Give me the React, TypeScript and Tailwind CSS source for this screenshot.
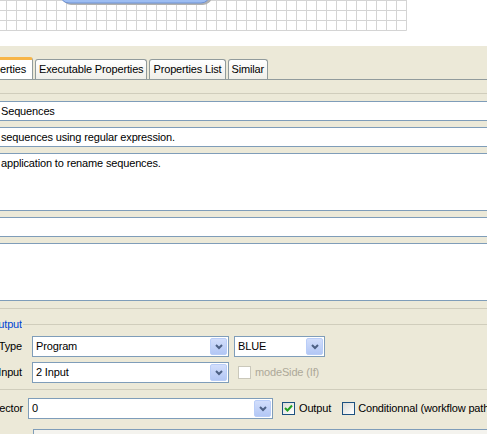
import React from 'react';

const font = "font-['Liberation_Sans',Arial,sans-serif] text-[11px] tracking-[-0.15px] text-black";

function Chevron() {
    return (
        <svg width="8" height="6" viewBox="0 0 8 6">
            <polyline points="1,1 4,4 7,1" fill="none" stroke="#4d6185" strokeWidth="2" />
        </svg>
    );
}

function Combo({ value, width }: { value: string; width: string }) {
    return (
        <div className={`${width} h-[21px] flex items-center bg-white border border-[#7f9db9] shrink-0`}>
            <span className="flex-1 pl-[3px] whitespace-nowrap overflow-hidden">{value}</span>
            <div className="w-[17px] h-[17px] mr-px flex items-center justify-center rounded-[2px] border border-[#b9cdf8] bg-gradient-to-b from-[#d2defb] to-[#b3c7f5]">
                <Chevron />
            </div>
        </div>
    );
}

function Check({ checked, disabled }: { checked?: boolean; disabled?: boolean }) {
    return (
        <div
            className={`w-[13px] h-[13px] shrink-0 flex items-center justify-center border ${
                disabled ? 'border-[#cac8bb] bg-white' : 'border-[#1c5180] bg-gradient-to-br from-[#dcdcd7] to-white'
            }`}
        >
            {checked && (
                <svg width="9" height="9" viewBox="0 0 9 9">
                    <polyline points="1,4 3.5,6.5 8,1.5" fill="none" stroke="#21a121" strokeWidth="2" />
                </svg>
            )}
        </div>
    );
}

function Field({ text }: { text: string }) {
    return (
        <div className="h-[20px] bg-white border-y border-[#7f9db9] flex items-center pl-px whitespace-nowrap">
            {text}
        </div>
    );
}

function Area({ text }: { text: string }) {
    return (
        <div className="h-[58px] bg-white border-y border-[#7f9db9] pl-px pt-[1px] whitespace-nowrap">
            {text}
        </div>
    );
}

function Label({ text, width, pr }: { text: string; width: string; pr: string }) {
    return (
        <div className={`${width} ${pr} shrink-0 flex justify-end overflow-hidden whitespace-nowrap`}>
            {text}
        </div>
    );
}

function Canvas() {
    const verticals = [...Array(41)].map((_, i) => 6.5 + i * 10);
    return (
        <div className="h-[46px] bg-white">
            <svg width="487" height="46">
                {verticals.map(x => (
                    <line key={x} x1={x} y1={0} x2={x} y2={30.5} stroke="#d4d4d4" />
                ))}
                {[0.5, 10.5, 20.5, 30.5].map(y => (
                    <line key={y} x1={0} y1={y} x2={406.5} y2={y} stroke="#d4d4d4" />
                ))}
                <rect x="62" y="-20" width="150" height="25" rx="9" fill="#b0b0b0" />
                <rect x="60" y="-22" width="150" height="25" rx="9" fill="#9dbdf2" stroke="#6f93d6" />
            </svg>
        </div>
    );
}

const tabs = ['Executable Properties', 'Properties List', 'Similar'];

export default function App() {
    return (
        <main className={`w-[487px] h-[434px] overflow-hidden bg-[#ece9d8] ${font}`}>
            <Canvas />

            <div className="h-[11px]" />
            <div className="h-[22px] flex items-end gap-[2px]">
                <div className="w-[33px] shrink-0 h-[22px] flex justify-end items-center overflow-hidden whitespace-nowrap bg-white border-t-[3px] border-t-[#f7b547] border-r border-r-[#919b9c] rounded-tr-[3px] pr-[6px] pb-[1px]">
                    Properties
                </div>
                {tabs.map(t => (
                    <div
                        key={t}
                        className="h-[20px] shrink-0 flex items-center px-[3px] border border-b-0 border-[#919b9c] rounded-t-[3px] bg-gradient-to-b from-white to-[#f0efe9] whitespace-nowrap"
                    >
                        {t}
                    </div>
                ))}
            </div>
            <div className="h-px bg-[#919b9c]" />
            <div className="h-[13px]" />
            <div className="h-px bg-[#d0cdbc]" />
            <div className="h-[7px]" />

            <Field text="Sequences" />
            <div className="h-[6px]" />
            <Field text="sequences using regular expression." />
            <div className="h-[6px]" />
            <Area text="application to rename sequences." />
            <div className="h-[6px]" />
            <Field text="" />
            <div className="h-[6px]" />
            <Area text="" />

            <div className="h-[7px]" />
            <div className="h-px bg-[#d0cdbc]" />
            <div className="h-[8px]" />

            <div className="h-[14px] flex items-center">
                <div className="w-[22px] shrink-0 flex justify-end overflow-hidden whitespace-nowrap text-[#0046d5]">Output</div>
                <div className="flex-1 h-px bg-[#d0cdbc] ml-px" />
            </div>
            <div className="h-[5px]" />

            <div className="h-[21px] flex items-center">
                <Label text="Type" width="w-[32px]" pr="pr-[10px]" />
                <Combo value="Program" width="w-[197px]" />
                <div className="w-[5px] shrink-0" />
                <Combo value="BLUE" width="w-[91px]" />
            </div>
            <div className="h-[5px]" />
            <div className="h-[21px] flex items-center">
                <Label text="Input" width="w-[32px]" pr="pr-[10px]" />
                <Combo value="2 Input" width="w-[197px]" />
                <div className="w-[9px] shrink-0" />
                <Check disabled />
                <span className="ml-[4px] text-[#aca899] whitespace-nowrap">modeSide (If)</span>
            </div>

            <div className="h-[6px]" />
            <div className="h-px bg-[#d0cdbc]" />
            <div className="h-[8px]" />

            <div className="h-[21px] flex items-center whitespace-nowrap">
                <Label text="Selector" width="w-[28px]" pr="pr-[5px]" />
                <Combo value="0" width="w-[245px]" />
                <div className="w-[9px] shrink-0" />
                <Check checked />
                <span className="ml-[4px] shrink-0">Output</span>
                <div className="w-[11px] shrink-0" />
                <Check />
                <span className="ml-[3px] shrink-0">Conditionnal (workflow path)</span>
            </div>

            <div className="h-[10px]" />
            <div className="ml-[33px] h-[20px] border-t border-l border-[#7f9db9] bg-[#f4f3ee]" />
        </main>
    );
}
